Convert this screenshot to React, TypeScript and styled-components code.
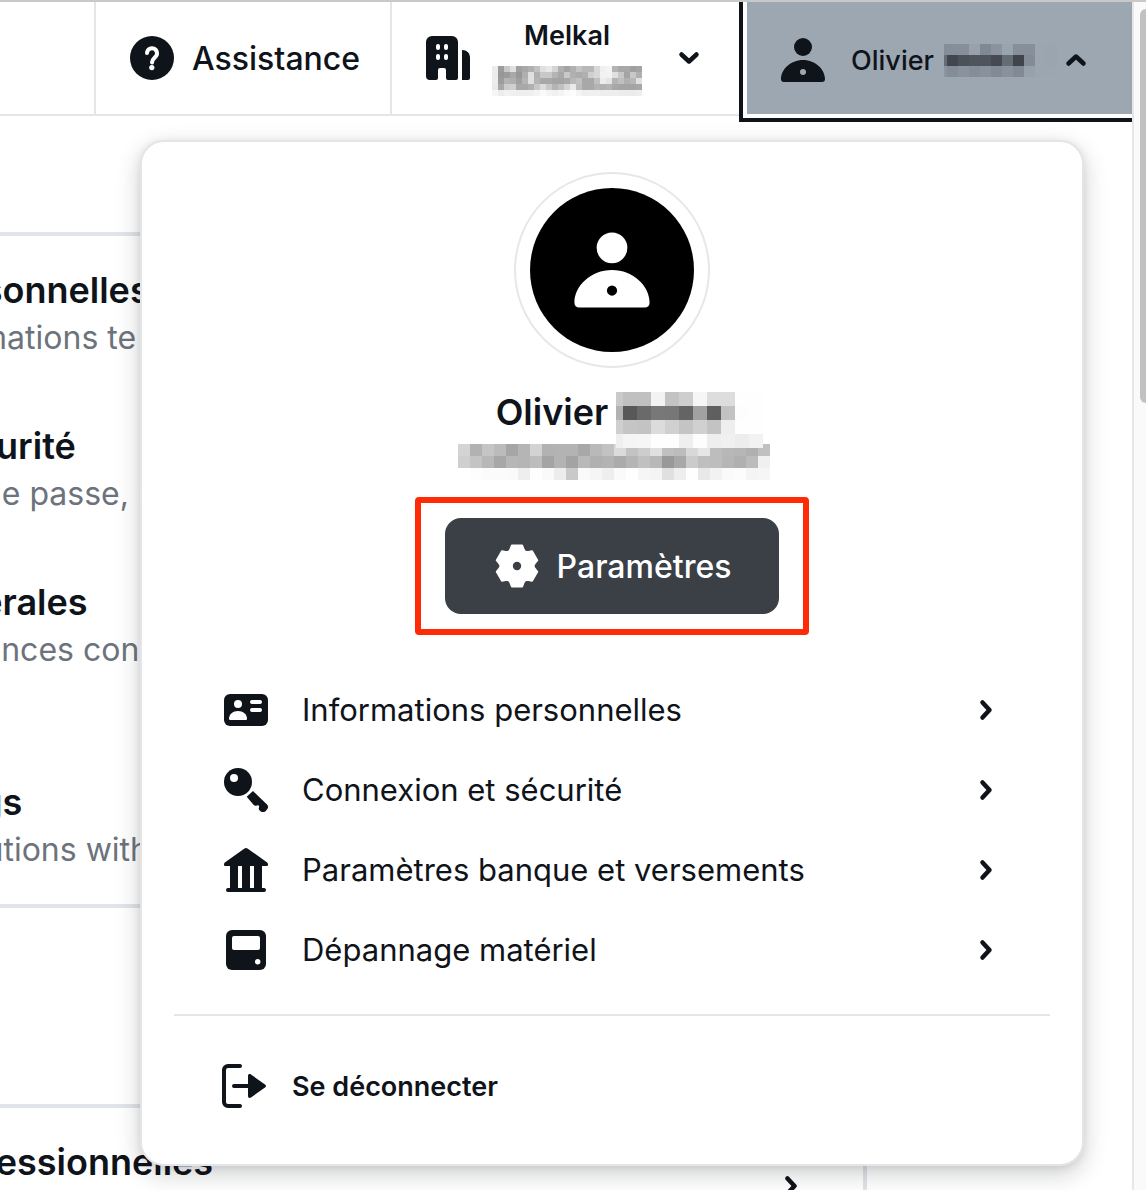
import React from "react";
import styled, { createGlobalStyle } from "styled-components";

const ink = "#0f131a";
const line = "#e3e5e8";

const GlobalStyle = createGlobalStyle`
  *, *::before, *::after { box-sizing: border-box; }
  body {
    margin: 0;
    background: #fff;
    color: ${ink};
    font-family: Inter, "Liberation Sans", sans-serif;
  }
  button { font-family: inherit; color: inherit; border: 0; background: none; padding: 0; cursor: pointer; }
  a { color: inherit; text-decoration: none; }
  h2, h3, p { margin: 0; font-weight: inherit; }
  svg { display: block; flex: none; }
`;

const Viewport = styled.div`
  display: flex;
  height: 100vh;
  overflow: hidden;
  border-top: 2px solid #c9c9c9;
`;

const Page = styled.div`
  position: relative;
  flex: 1;
  min-width: 0;
  overflow: hidden;
`;

const ScrollTrack = styled.div`
  width: 14px;
  padding: 7px 0 0 6px;
  overflow: hidden;
  border-left: 2px solid #e6e7e9;
  background: #fafafa;
`;

const ScrollThumb = styled.div`
  width: 12px;
  height: calc(100% / 3);
  border-radius: 6px;
  background: #c1c1c1;
`;

const TopBar = styled.header`
  display: flex;
  justify-content: flex-end;
  height: 114px;
  border-bottom: 2px solid ${line};
`;

const BarButton = styled.button<{ $gap: number }>`
  display: flex;
  align-items: center;
  gap: ${(p) => p.$gap}px;
  padding: 0 30px 0 32px;
  border-left: 2px solid ${line};
  font-size: 32px;
  font-weight: 500;
  white-space: nowrap;
`;

const AccountButton = styled(BarButton)`
  padding-right: 42px;
`;

const UserButton = styled(BarButton)`
  position: relative;
  padding: 4px 40px 0 32px;
  border: 0;
  background: #9da7b1;
  font-size: 27px;
  outline: 4px solid ${ink};
  outline-offset: 4px;
  box-shadow: 0 0 0 4px #fff;
`;

const UserLabel = styled.span`
  display: flex;
  align-items: center;
  gap: 10px;
`;

const AccountLabel = styled.span`
  display: flex;
  flex-direction: column;
  align-items: center;
  gap: 10px;
  margin-right: 11px;
  padding-bottom: 4px;
  font-size: 27px;
  font-weight: 600;
  line-height: 40px;
`;

const Settings = styled.main`
  display: flex;
  flex-direction: column;
  gap: 196px;
  margin: 116px 265px 0 -357px;
`;

const Panel = styled.section`
  display: flex;
  flex-direction: column;
  gap: 60px;
  padding: 30px 56px 30px 48px;
  border: 4px solid #e1e4e8;
  border-radius: 16px;
`;

const PanelRow = styled.a<{ $tall?: boolean }>`
  display: flex;
  align-items: center;
  justify-content: space-between;
  min-height: ${(p) => (p.$tall ? 140 : 96)}px;
`;

const PanelText = styled.div`
  align-self: flex-start;
  white-space: nowrap;
`;

const PanelTitle = styled.h3`
  font-size: 36px;
  font-weight: 600;
  line-height: 48px;
`;

const PanelHint = styled.p`
  color: #6c737c;
  font-size: 32px;
  line-height: 48px;
`;

const Menu = styled.div`
  position: absolute;
  top: 138px;
  right: 48px;
  width: calc(100% - 188px);
  padding: 30px 32px;
  border: 2px solid ${line};
  border-radius: 24px;
  background: #fff;
  box-shadow: 0 8px 24px rgba(15, 19, 26, 0.2), 0 2px 8px rgba(15, 19, 26, 0.08);
`;

const Profile = styled.div`
  display: flex;
  flex-direction: column;
  align-items: center;
`;

const AvatarRing = styled.div`
  padding: 14px;
  border: 2px solid #e6e7ea;
  border-radius: 50%;
`;

const Avatar = styled.div`
  display: grid;
  place-items: center;
  width: 164px;
  height: 164px;
  border-radius: 50%;
  background: #000;
  color: #fff;
`;

const Name = styled.h2`
  position: relative;
  display: flex;
  align-items: flex-start;
  gap: 8px;
  height: 48px;
  margin-top: 20px;
  font-size: 36px;
  font-weight: 600;
  line-height: 48px;
`;

const NameMask = styled.span`
  padding-top: 4px;
`;

const Email = styled.div`
  height: 36px;
  margin: 8px 0 17px;
`;

const Highlight = styled.div`
  padding: 15px 24px;
  border: 6px solid #ff2a06;
  border-radius: 4px;
`;

const SettingsButton = styled.button`
  display: flex;
  align-items: center;
  gap: 16px;
  height: 96px;
  padding: 0 48px;
  border-radius: 16px;
  background: #3b3f46;
  color: #fff;
  font-size: 32px;
  font-weight: 500;
`;

const MenuList = styled.nav`
  display: flex;
  flex-direction: column;
  margin-top: 35px;
  padding-bottom: 24px;
  border-bottom: 2px solid ${line};
`;

const MenuLink = styled.a`
  display: flex;
  align-items: center;
  gap: 32px;
  height: 80px;
  padding: 0 48px;
  font-size: 31px;
`;

const MenuLabel = styled.span`
  flex: 1;
  line-height: 40px;
`;

const LogoutButton = styled.button`
  display: flex;
  align-items: center;
  gap: 24px;
  height: 80px;
  margin: 30px 0 8px;
  padding: 0 46px;
  font-size: 27px;
  font-weight: 600;
`;

type IconProps = { size?: number; children: React.ReactNode };

const Icon = ({ size = 48, children }: IconProps) => (
  <svg width={size} height={size} viewBox="0 0 48 48" fill="currentColor" fillRule="evenodd" aria-hidden="true">
    {children}
  </svg>
);

const PersonIcon = ({ size }: { size?: number }) => (
  <Icon size={size}>
    <circle cx="24" cy="11" r="9" />
    <path d="M24 24c12.500 0 22 9.500 22 19 0 2-1 3-3 3H5c-2 0-3-1-3-3 0-9.500 9.500-19 22-19zM24 33a3 3 0 1 0 0 6 3 3 0 0 0 0-6z" />
  </Icon>
);

const HelpIcon = () => (
  <Icon>
    <circle cx="24" cy="24" r="22" />
    <path d="M19 19a5 5 0 1 1 8.500 3.800c-2 1.900-3.300 3-3.500 5.700" fill="none" stroke="#fff" strokeWidth="4" strokeLinecap="round" strokeLinejoin="round" />
    <circle cx="23.800" cy="33.600" r="2.600" fill="#fff" />
  </Icon>
);

const BuildingIcon = () => (
  <Icon>
    <path d="M8 2h20a6 6 0 0 1 6 6v36a2 2 0 0 1-2 2h-8a2 2 0 0 1-2-2v-8a2 2 0 0 0-2-2h-4a2 2 0 0 0-2 2v8a2 2 0 0 1-2 2H6a4 4 0 0 1-4-4V8a6 6 0 0 1 6-6z" />
    <path d="M38 16c5 0 8 3 8 8v20a2 2 0 0 1-2 2h-6z" />
    <g fill="#fff">
      <rect x="12" y="10" width="4" height="6" rx="2" />
      <rect x="20" y="10" width="4" height="6" rx="2" />
      <rect x="12" y="20" width="4" height="6" rx="2" />
      <rect x="20" y="20" width="4" height="6" rx="2" />
    </g>
  </Icon>
);

const IdCardIcon = () => (
  <Icon>
    <rect x="2" y="8" width="44" height="32" rx="6" />
    <g fill="#fff">
      <circle cx="16" cy="18" r="4" />
      <path d="M16 25c5 0 9 3.500 9 7.500 0 1-.500 1.500-1.500 1.500h-15c-1 0-1.500-.500-1.500-1.500C7 28.500 11 25 16 25z" />
      <rect x="28" y="14" width="12" height="4" rx="2" />
      <rect x="28" y="22" width="12" height="4" rx="2" />
    </g>
  </Icon>
);

const KeyIcon = () => (
  <Icon>
    <circle cx="16" cy="16" r="14" />
    <circle cx="12" cy="12" r="4" fill="#fff" />
    <path d="M24.700 30.700L31 25l14 13.500c1.500 1.500 1.300 3 .500 4.200l-1.500 2c-1.500 1.800-4 1.800-5.500.500-1.500-1.200-2.200-2.500-1.500-3.700.5-1.500-.5-2.500-2-2-1.300.5-2.500.2-3.500-.800z" />
  </Icon>
);

const BankIcon = () => (
  <Icon>
    <path d="M22.500 2.500c1-.700 2-.700 3 0L44.500 16c2.500 1.800 1.500 4 0 4H40v22h2a2 2 0 0 1 0 4H6a2 2 0 0 1 0-4h2V20H3.500c-1.500 0-2.500-2.200 0-4zM16 20v22h4V20zM28 20v22h4V20z" />
  </Icon>
);

const ReaderIcon = () => (
  <Icon>
    <rect x="4" y="4" width="40" height="40" rx="6" />
    <rect x="10" y="10" width="28" height="14" rx="2" fill="#fff" />
    <circle cx="35.700" cy="35.700" r="2.700" fill="#fff" />
  </Icon>
);

const LogoutIcon = () => (
  <Icon>
    <path d="M20 4H8a4 4 0 0 0-4 4v32a4 4 0 0 0 4 4h12M14 24h16" fill="none" stroke="currentColor" strokeWidth="4" strokeLinecap="round" />
    <path d="M28 14c0-2 1.500-2.500 3-1.500l14 10c1.300 1 1.300 2 0 3l-14 10c-1.500 1-3 .500-3-1.500z" />
  </Icon>
);

const gearOutline = Array.from({ length: 6 }, (_, tooth) =>
  [[-26, 16.5], [-20, 18], [-14, 20.8], [14, 20.8], [20, 18], [26, 16.5]].map(([angle, radius]) => {
    const a = ((tooth * 60 - 90 + angle) * Math.PI) / 180;
    return `${(24 + radius * Math.cos(a)).toFixed(2)},${(24 + radius * Math.sin(a)).toFixed(2)}`;
  }).join(" ")
).join(" ");

const GearIcon = () => (
  <Icon>
    <polygon points={gearOutline} stroke="currentColor" strokeWidth="2.500" strokeLinejoin="round" />
    <circle cx="24" cy="24" r="4.200" fill="#3b3f46" />
  </Icon>
);

const chevrons = {
  right: "M12.500 8.500l7 7.500-7 7.500",
  down: "M8.500 12.500l7.500 7 7.500-7",
  up: "M8.500 19.500l7.500-7 7.500 7",
};

const Chevron = ({ to }: { to: keyof typeof chevrons }) => (
  <svg width="32" height="32" viewBox="0 0 32 32" fill="none" stroke="currentColor" strokeWidth="4.500" strokeLinecap="round" strokeLinejoin="round" aria-hidden="true">
    <path d={chevrons[to]} />
  </svg>
);

type MosaicProps = { rows: string[]; tile: number; lead?: number; width: number };

/* Pixelated stand-in for private details: each entry is a tile's grey (two hex digits) or full colour. */
const Mosaic = ({ rows, tile, lead = tile, width }: MosaicProps) => (
  <svg width={width} height={rows.length * tile} overflow="visible" shapeRendering="crispEdges" role="img" aria-label="Masqué">
    {rows.flatMap((row, r) =>
      row.split(" ").map((shade, c) => {
        if (shade === "--") return null;
        const fill = shade.length === 2 ? `#${shade}${shade}${shade}` : `#${shade}`;
        return (
          <rect key={`${r}-${c}`} x={c === 0 ? 0 : lead + (c - 1) * tile} y={r * tile} width={c === 0 ? lead : tile} height={tile} fill={fill} />
        );
      })
    )}
  </svg>
);

const accountMask = [
  "ec 9c c8 e0 a0 a8 b0 c0 e0 e8 d4 b0 a4 b0 c4 b8 b8 d8 f0 f4 b4 a8 a8 a0 a4",
  "ec 98 9c a8 98 b0 e0 b0 c8 c8 b4 a8 c8 b0 ac b0 d0 d8 f2 f2 e0 c8 a4 c8 b0",
  "ec 9c b4 b0 a0 b4 e0 b4 a8 a8 a4 a4 a8 b8 c0 a8 a8 c0 ec e4 b4 c0 b0 b8 e0",
  "ea a8 cc d0 a8 a8 b0 c8 dc c8 b4 c0 d4 ea bc a8 a8 b4 b0 b4 a8 a4 a4 a4 a8",
  "f6 ec f2 f0 ee ee f0 f4 fa f4 f0 f4 fa fc f4 ee f0 f0 ee ee ee ec ec ec ee",
];

const userMask = [
  "858e98 868f99 878f99 99a2ac 808993 8b949e 9aa4ae 87909a 87909a 9ca6b0 9ba5af",
  "656d76 42474f 4c525a 4f555d 4f555d 454a52 646c75 40454c 838c96 9ca6b0 9ba5af",
  "8c959f 848d97 8a939d 858e98 89929c 828b95 89929c 818a94 97a1ab 9ca6b0 9ca6b0",
];

const nameMask = [
  "ca c0 c0 f3 c3 ce f6 dd dd fe fe",
  "b2 58 6a 78 77 64 a1 5f c2 fd fe",
  "cf c5 c3 dc d0 c4 d0 c3 ee fe fe",
  "ef f5 f6 fe fe ef fd ee f0 ed f2",
];

const emailMask = [
  "d4 b2 c5 bb a6 b5 d3 b2 b3 b3 a8 b9 c2 db c3 cd e0 c0 bc d8 e6 bd b8 b6 b0 c0",
  "cf c4 b8 a7 b7 b5 bd a4 b3 a3 b9 b0 b3 ab b5 c0 b8 99 a8 cb bf bd b6 b0 bb f0",
  "-- fd fb fb fa ee fe fa ed c9 fa f5 ee fa fe f6 f4 e0 ee fe e8 f2 fa fc f4 f6",
];

const panelRows = [
  { title: "Informations personnelles", hint: "Regardez vos informations te" },
  { title: "Connexion et sécurité", hint: "Adaptez votre mot de passe, n" },
  { title: "Préférences générales", hint: "Adaptez vos préférences con" },
  { title: "Statement settings", hint: "Customize your solutions with" },
];

const menuRows = [
  { icon: <IdCardIcon />, label: "Informations personnelles" },
  { icon: <KeyIcon />, label: "Connexion et sécurité" },
  { icon: <BankIcon />, label: "Paramètres banque et versements" },
  { icon: <ReaderIcon />, label: "Dépannage matériel" },
];

export default function App() {
  return (
    <Viewport>
      <GlobalStyle />
      <Page>
        <TopBar>
          <BarButton $gap={16}>
            <HelpIcon />
            Assistance
          </BarButton>
          <AccountButton $gap={20}>
            <BuildingIcon />
            <AccountLabel>
              Melkal
              <Mosaic rows={accountMask} tile={6} width={150} />
            </AccountLabel>
            <Chevron to="down" />
          </AccountButton>
          <UserButton $gap={24} aria-expanded="true">
            <PersonIcon />
            <UserLabel>
              Olivier
              <Mosaic rows={userMask} tile={11} lead={3} width={92} />
            </UserLabel>
            <Chevron to="up" />
          </UserButton>
        </TopBar>

        <Settings>
          <Panel>
            {panelRows.map((row, i) => (
              <PanelRow href="#" key={row.title} $tall={i === 2}>
                <PanelText>
                  <PanelTitle>{row.title}</PanelTitle>
                  <PanelHint>{row.hint}</PanelHint>
                </PanelText>
                <Chevron to="right" />
              </PanelRow>
            ))}
          </Panel>
          <Panel>
            <PanelRow href="#">
              <PanelText>
                <PanelTitle>Informations professionnelles</PanelTitle>
              </PanelText>
              <Chevron to="right" />
            </PanelRow>
          </Panel>
        </Settings>

        <Menu>
          <Profile>
            <AvatarRing>
              <Avatar>
                <PersonIcon size={82} />
              </Avatar>
            </AvatarRing>
            <Name>
              Olivier
              <NameMask>
                <Mosaic rows={nameMask} tile={14} lead={7} width={112} />
              </NameMask>
            </Name>
            <Email>
              <Mosaic rows={emailMask} tile={12} width={308} />
            </Email>
            <Highlight>
              <SettingsButton>
                <GearIcon />
                Paramètres
              </SettingsButton>
            </Highlight>
          </Profile>
          <MenuList>
            {menuRows.map((row) => (
              <MenuLink href="#" key={row.label}>
                {row.icon}
                <MenuLabel>{row.label}</MenuLabel>
                <Chevron to="right" />
              </MenuLink>
            ))}
          </MenuList>
          <LogoutButton>
            <LogoutIcon />
            Se déconnecter
          </LogoutButton>
        </Menu>
      </Page>
      <ScrollTrack>
        <ScrollThumb />
      </ScrollTrack>
    </Viewport>
  );
}
